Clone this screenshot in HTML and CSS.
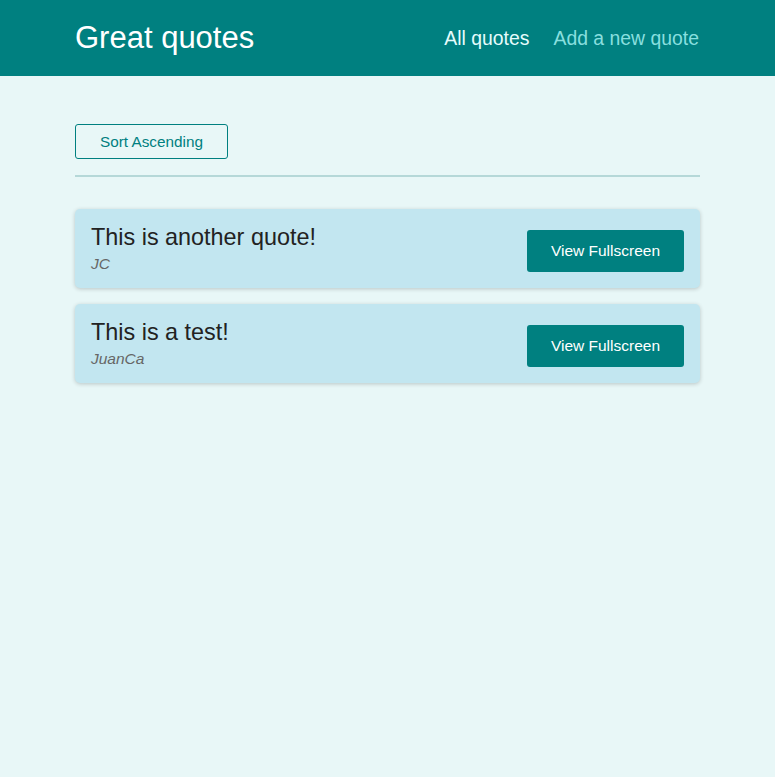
FILE: index.html
```html
<!DOCTYPE html>
<html lang="en">
<head>
<meta charset="utf-8">
<title>Great quotes</title>
<link rel="stylesheet" href="styles.css">
</head>
<body>
<header class="header">
  <div class="logo">Great quotes</div>
  <nav class="nav">
    <a class="nav-link active" href="#">All quotes</a>
    <a class="nav-link" href="#">Add a new quote</a>
  </nav>
</header>
<main class="main">
  <div class="sorting">
    <button class="sort-btn">Sort Ascending</button>
  </div>
  <ul class="list">
    <li class="item">
      <figure class="quote">
        <blockquote class="quote-text">This is another quote!</blockquote>
        <figcaption class="author">JC</figcaption>
      </figure>
      <a class="btn" href="#">View Fullscreen</a>
    </li>
    <li class="item">
      <figure class="quote">
        <blockquote class="quote-text">This is a test!</blockquote>
        <figcaption class="author">JuanCa</figcaption>
      </figure>
      <a class="btn" href="#">View Fullscreen</a>
    </li>
  </ul>
</main>
</body>
</html>
```

FILE: styles.css
```css
* { box-sizing: border-box; }
html, body {
  margin: 0;
  padding: 0;
}
body {
  background: #e8f7f7;
  font-family: "Liberation Sans", Arial, sans-serif;
  min-height: 777px;
}
.header {
  height: 76px;
  background: #008080;
  display: flex;
  align-items: center;
  justify-content: space-between;
  padding: 0 76px 0 75px;
}
.logo {
  color: #ffffff;
  font-size: 31px;
  padding-bottom: 1px;
}
.nav {
  display: flex;
  gap: 24px;
}
.nav-link {
  color: #88dfdf;
  text-decoration: none;
  font-size: 19.4px;
}
.nav-link.active {
  color: #e6fcfc;
}
.main {
  width: 625px;
  margin: 0 auto;
  padding-top: 48px;
}
.sorting {
  padding-bottom: 16px;
  border-bottom: 2px solid #b5d8d8;
  margin-bottom: 32px;
}
.sort-btn {
  font-family: inherit;
  font-size: 15.3px;
  color: #008080;
  background: transparent;
  border: 1px solid #008080;
  border-radius: 3px;
  padding: 7.5px 24px;
  line-height: 18px;
  cursor: pointer;
}
.list {
  list-style: none;
  margin: 0;
  padding: 0;
  display: flex;
  flex-direction: column;
  gap: 16px;
}
.item {
  background: #c2e6f0;
  border-radius: 5px;
  box-shadow: 0 1px 4px rgba(0, 0, 0, 0.2);
  padding: 16px 16px 15px;
  display: flex;
  align-items: center;
  justify-content: space-between;
}
.quote {
  margin: 0;
}
.quote-text {
  margin: 0;
  font-size: 23.4px;
  line-height: 24px;
  color: #222;
}
.author {
  margin-top: 6px;
  font-size: 15.5px;
  line-height: 18px;
  font-style: italic;
  color: #666;
}
.btn {
  display: block;
  background: #008080;
  color: #ffffff;
  text-decoration: none;
  font-size: 15.5px;
  line-height: 18px;
  padding: 12px 24px;
  border-radius: 3px;
  margin-top: 3px;
}
```
